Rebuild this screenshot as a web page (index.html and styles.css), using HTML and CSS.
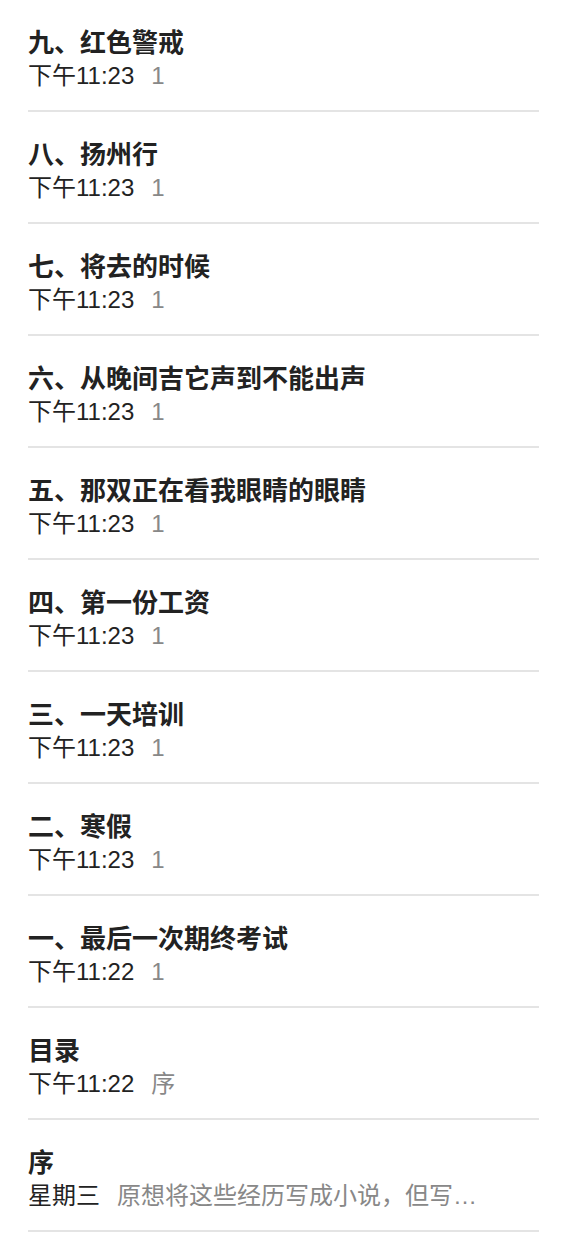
FILE: index.html
```html
<!DOCTYPE html>
<html lang="zh-CN">
	<head>
		<meta charset="UTF-8" />
		<title>备忘录</title>
		<link rel="stylesheet" href="styles.css">
	</head>
	<body>
		<ul class="note-list">
			<li class="note">
				<div class="note-title">九、红色警戒</div>
				<div class="note-meta"><span class="note-date">下午11:23</span><span class="note-preview">1</span></div>
			</li>
			<li class="note">
				<div class="note-title">八、扬州行</div>
				<div class="note-meta"><span class="note-date">下午11:23</span><span class="note-preview">1</span></div>
			</li>
			<li class="note">
				<div class="note-title">七、将去的时候</div>
				<div class="note-meta"><span class="note-date">下午11:23</span><span class="note-preview">1</span></div>
			</li>
			<li class="note">
				<div class="note-title">六、从晚间吉它声到不能出声</div>
				<div class="note-meta"><span class="note-date">下午11:23</span><span class="note-preview">1</span></div>
			</li>
			<li class="note">
				<div class="note-title">五、那双正在看我眼睛的眼睛</div>
				<div class="note-meta"><span class="note-date">下午11:23</span><span class="note-preview">1</span></div>
			</li>
			<li class="note">
				<div class="note-title">四、第一份工资</div>
				<div class="note-meta"><span class="note-date">下午11:23</span><span class="note-preview">1</span></div>
			</li>
			<li class="note">
				<div class="note-title">三、一天培训</div>
				<div class="note-meta"><span class="note-date">下午11:23</span><span class="note-preview">1</span></div>
			</li>
			<li class="note">
				<div class="note-title">二、寒假</div>
				<div class="note-meta"><span class="note-date">下午11:23</span><span class="note-preview">1</span></div>
			</li>
			<li class="note">
				<div class="note-title">一、最后一次期终考试</div>
				<div class="note-meta"><span class="note-date">下午11:22</span><span class="note-preview">1</span></div>
			</li>
			<li class="note">
				<div class="note-title">目录</div>
				<div class="note-meta"><span class="note-date">下午11:22</span><span class="note-preview">序</span></div>
			</li>
			<li class="note">
				<div class="note-title">序</div>
				<div class="note-meta"><span class="note-date">星期三</span><span class="note-preview">原想将这些经历写成小说，但写…</span></div>
			</li>
		</ul>
	</body>
</html>
```

FILE: styles.css
```css
body {
	margin: 0;
	background: #fff;
	font-family: "Liberation Sans", "Noto Sans CJK SC", sans-serif;
	color: #222;
}
.note-list {
	list-style: none;
	margin: 0;
	padding: 0 25px 0 28px;
}
.note {
	padding: 27px 0 19px;
	border-bottom: 2px solid #e4e4e4;
}
.note-title {
	font-size: 26px;
	font-weight: 700;
	line-height: 32px;
	white-space: nowrap;
}
.note-meta {
	margin-top: 2px;
	font-size: 24px;
	line-height: 30px;
	white-space: nowrap;
	overflow: hidden;
}
.note-date {
	margin-right: 17px;
}
.note-preview {
	color: #888;
}
```
